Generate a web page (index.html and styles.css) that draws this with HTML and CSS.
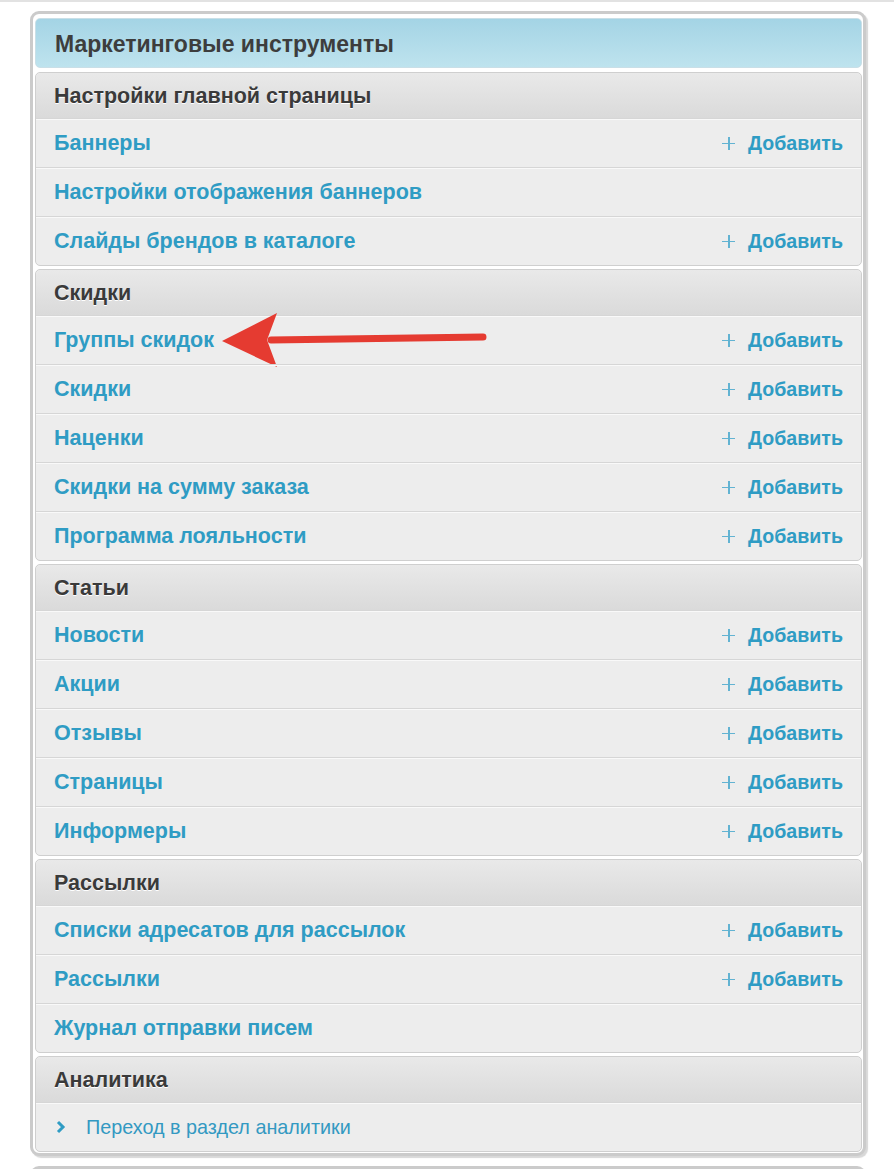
FILE: index.html
```html
<!DOCTYPE html>
<html lang="ru">
<head>
    <meta charset="UTF-8">
    <title>Маркетинговые инструменты</title>
    <link rel="stylesheet" href="styles.css">
</head>
<body>
    <div class="page">
        <div class="panel">
            <div class="panel-title">Маркетинговые инструменты</div>

            <div class="group">
                <div class="group-head">Настройки главной страницы</div>
                <div class="row"><a class="link">Баннеры</a><a class="add"><span class="plus"></span>Добавить</a></div>
                <div class="row"><a class="link">Настройки отображения баннеров</a></div>
                <div class="row"><a class="link">Слайды брендов в каталоге</a><a class="add"><span class="plus"></span>Добавить</a></div>
            </div>

            <div class="group">
                <div class="group-head">Скидки</div>
                <div class="row marked">
                    <a class="link">Группы скидок</a><a class="add"><span class="plus"></span>Добавить</a>
                    <svg class="arrow" width="280" height="70" viewBox="0 0 280 70">
                        <line x1="56" y1="35" x2="268" y2="32" stroke="#e53b31" stroke-width="7" stroke-linecap="round"/>
                        <polygon points="7,36 62,8 52,35 62,62" fill="#e53b31"/>
                    </svg>
                </div>
                <div class="row"><a class="link">Скидки</a><a class="add"><span class="plus"></span>Добавить</a></div>
                <div class="row"><a class="link">Наценки</a><a class="add"><span class="plus"></span>Добавить</a></div>
                <div class="row"><a class="link">Скидки на сумму заказа</a><a class="add"><span class="plus"></span>Добавить</a></div>
                <div class="row"><a class="link">Программа лояльности</a><a class="add"><span class="plus"></span>Добавить</a></div>
            </div>

            <div class="group">
                <div class="group-head">Статьи</div>
                <div class="row"><a class="link">Новости</a><a class="add"><span class="plus"></span>Добавить</a></div>
                <div class="row"><a class="link">Акции</a><a class="add"><span class="plus"></span>Добавить</a></div>
                <div class="row"><a class="link">Отзывы</a><a class="add"><span class="plus"></span>Добавить</a></div>
                <div class="row"><a class="link">Страницы</a><a class="add"><span class="plus"></span>Добавить</a></div>
                <div class="row"><a class="link">Информеры</a><a class="add"><span class="plus"></span>Добавить</a></div>
            </div>

            <div class="group">
                <div class="group-head">Рассылки</div>
                <div class="row"><a class="link">Списки адресатов для рассылок</a><a class="add"><span class="plus"></span>Добавить</a></div>
                <div class="row"><a class="link">Рассылки</a><a class="add"><span class="plus"></span>Добавить</a></div>
                <div class="row"><a class="link">Журнал отправки писем</a></div>
            </div>

            <div class="group">
                <div class="group-head">Аналитика</div>
                <div class="row">
                    <a class="goto">
                        <svg class="chevron" width="10" height="14" viewBox="0 0 10 14"><path d="M2 2 L7 7 L2 12" fill="none" stroke="#2f9cc4" stroke-width="3"/></svg>
                        Переход в раздел аналитики
                    </a>
                </div>
            </div>
        </div>

        <div class="panel next"></div>
    </div>
</body>
</html>
```

FILE: styles.css
```css
body {
    margin: 0;
    background: #fff;
    font-family: "Liberation Sans", Arial, sans-serif;
}

.page {
    border-top: 2px solid #e2e2e2;
    min-height: 1167px;
    overflow: hidden;
}

.panel {
    width: 836px;
    box-sizing: border-box;
    margin: 9px 0 0 30px;
    padding: 4px 1px 1px 2px;
    border: 3px solid #cbcbcb;
    border-radius: 9px;
    box-shadow: 2px 2px 1px #d8d8d8;
    background: #fff;
}

.panel.next {
    margin-top: 10px;
    height: 40px;
}

.panel-title {
    height: 48px;
    line-height: 50px;
    padding-left: 19px;
    border: 1px solid #c9dfe7;
    border-radius: 5px;
    background: linear-gradient(#a4d4e5, #bee3ee);
    color: #3d3d3d;
    font-size: 23px;
    font-weight: bold;
    margin-bottom: 4px;
}

.group {
    border: 1px solid #cfcfcf;
    border-radius: 5px;
    background: #ededed;
    margin-bottom: 3px;
}

.group:last-child {
    margin-bottom: 0;
}

.group-head {
    height: 45px;
    line-height: 47px;
    padding-left: 18px;
    border-radius: 5px 5px 0 0;
    background: linear-gradient(#e9e9e9, #dadada);
    color: #3a3a3a;
    font-size: 21.5px;
    font-weight: bold;
    text-shadow: 0 1px 0 #fff;
}

.row {
    position: relative;
    display: flex;
    align-items: center;
    justify-content: space-between;
    height: 48px;
    padding: 0 18px;
    border-top: 1px solid #d6d6d6;
    box-shadow: inset 0 1px 0 #f9f9f9;
}

.link {
    color: #2f9cc4;
    font-size: 21.5px;
    font-weight: bold;
}

.add {
    display: flex;
    align-items: center;
    color: #2f9cc4;
    font-size: 19.6px;
    font-weight: bold;
}

.plus {
    position: relative;
    width: 13px;
    height: 13px;
    margin-right: 13px;
}

.plus::before,
.plus::after {
    content: "";
    position: absolute;
    background: #62b3d2;
}

.plus::before {
    left: 0;
    top: 6px;
    width: 13px;
    height: 1.5px;
}

.plus::after {
    left: 6px;
    top: 0;
    width: 1.5px;
    height: 13px;
}

.goto {
    display: flex;
    align-items: center;
    color: #3399c2;
    font-size: 19.8px;
}

.chevron {
    margin: 0 20px 0 2px;
}

.arrow {
    position: absolute;
    left: 179px;
    top: -11px;
    overflow: visible;
    pointer-events: none;
}
```
